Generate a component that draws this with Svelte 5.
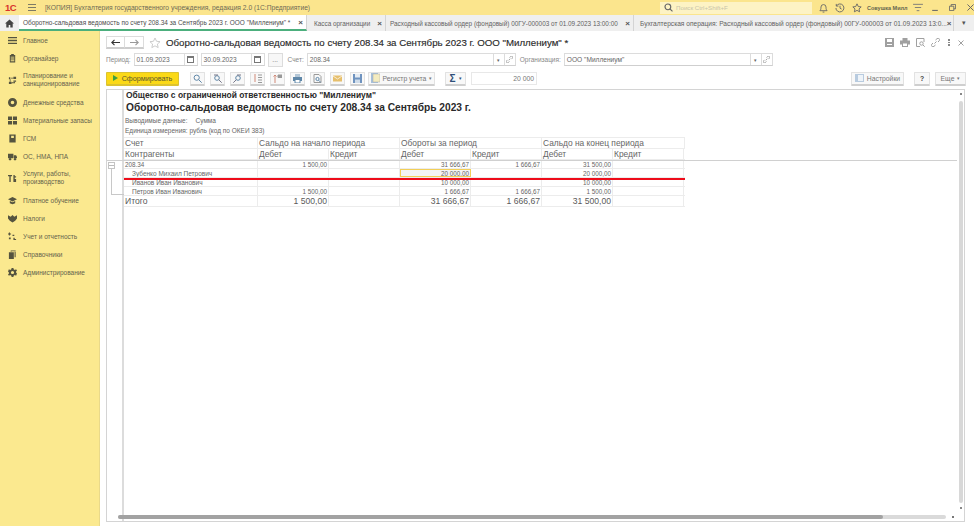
<script>
  const menu = [
    { name: 'Главное', icon: 'lines' },
    { name: 'Органайзер', icon: 'note' },
    { name: 'Планирование и санкционирование', icon: 'plan', tall: true },
    { name: 'Денежные средства', icon: 'coin' },
    { name: 'Материальные запасы', icon: 'grid' },
    { name: 'ГСМ', icon: 'fuel' },
    { name: 'ОС, НМА, НПА', icon: 'truck' },
    { name: 'Услуги, работы, производство', icon: 'tools', tall: true },
    { name: 'Платное обучение', icon: 'cap' },
    { name: 'Налоги', icon: 'eagle' },
    { name: 'Учет и отчетность', icon: 'calc' },
    { name: 'Справочники', icon: 'books' },
    { name: 'Администрирование', icon: 'gear' }
  ];

  const tabs = [
    { text: 'Касса организации', w: 79, fs: 6.4 },
    { text: 'Расходный кассовый ордер (фондовый) 00ГУ-000003 от 01.09.2023 13:00:00', w: 248, fs: 6.4 },
    { text: 'Бухгалтерская операция: Расходный кассовый ордер (фондовый) 00ГУ-000003 от 01.09.2023 13:0...', w: 320, fs: 6.6 }
  ];

  const rows = [
    { cls: 'small', name: '208.34', v: ['1 500,00', '', '31 666,67', '1 666,67', '31 500,00', ''] },
    { cls: 'small sub', name: 'Зубенко Михаил Петрович', v: ['', '', '20 000,00', '', '20 000,00', ''], active: true },
    { cls: 'small sub', name: 'Иванов Иван Иванович', v: ['', '', '10 000,00', '', '10 000,00', ''] },
    { cls: 'small sub', name: 'Петров Иван Иванович', v: ['1 500,00', '', '1 666,67', '1 666,67', '1 500,00', ''] },
    { cls: 'total', name: 'Итого', v: ['1 500,00', '', '31 666,67', '1 666,67', '31 500,00', ''] }
  ];

  const tools = ['find', 'findnext', 'findprev', 'sort', 'top', 'print', 'preview', 'mail', 'save'];
</script>

<div class="top">
  <span class="logo">1С</span>
  <span class="burger"><i></i><i></i><i></i></span>
  <span class="app-title">[КОПИЯ] Бухгалтерия государственного учреждения, редакция 2.0 (1С:Предприятие)</span>
  <div class="search">
    <svg width="9" height="9" viewBox="0 0 10 10" fill="none" stroke="#666" stroke-width="1.3"><circle cx="4.3" cy="4.3" r="3.2"/><path d="M6.6 6.600 9.400 9.400"/></svg>
    <span>Поиск Ctrl+Shift+F</span>
  </div>
  <div class="top-icons">
    <svg width="9" height="10" viewBox="0 0 10 11" fill="none" stroke="#666"><path d="M1 8.500c1-1 1.200-2 1.200-4a2.800 2.800 0 0 1 5.600 0c0 2 .2 3 1.200 4zM4 10h2"/></svg>
    <svg class="hist" width="10" height="10" viewBox="0 0 11 11" fill="none" stroke="#666"><path d="M1.600 3.200A4.400 4.400 0 1 1 1 5.500M1.400 1v2.400h2.400M5.500 3v2.700l1.800 1"/></svg>
    <svg class="hist" width="10" height="10" viewBox="0 0 11 11" fill="none" stroke="#666"><path d="m5.500.9 1.400 3 3.200.4-2.400 2.200.7 3.200-2.900-1.600-2.900 1.600.7-3.200L.9 4.300l3.200-.4z"/></svg>
    <span class="user">Совушка Милл</span>
    <svg class="filt" width="10" height="9" viewBox="0 0 11 10" fill="none" stroke="#777"><path d="M0 1.500h11M2 5h7M4 8.500h3"/></svg>
    <svg class="min" width="6" height="8" viewBox="0 0 7 10" fill="none" stroke="#666" stroke-width="1.300"><path d="M0 8h7"/></svg>
    <svg class="win" width="7" height="7" viewBox="0 0 8 8" fill="none" stroke="#666"><path d="M.5 2.500h5v5h-5zM2.500 2.500v-2h5v5h-2"/></svg>
    <svg class="win" width="7" height="7" viewBox="0 0 8 8" fill="none" stroke="#666" stroke-width="1.100"><path d="m.5.5 7 7M7.500.5l-7 7"/></svg>
  </div>
</div>

<div class="tabs">
  <div class="home">
    <svg width="9" height="9" viewBox="0 0 9 9" fill="#444"><path d="M4.500.5 9 4.600H7.700V8.600H5.300V6H3.700V8.600H1.300V4.600H0z"/></svg>
  </div>
  <div class="tab active">
    <span>Оборотно-сальдовая ведомость по счету 208.34 за Сентябрь 2023 г. ООО "Миллениум" *</span>
    <b>×</b>
  </div>
  {#each tabs as tab}
    <div class="tab" style="width: {tab.w}px; font-size: {tab.fs}px">
      <span>{tab.text}</span>
      <b>×</b>
    </div>
  {/each}
  <div class="tab-more">▾</div>
</div>

<div class="page">
  <aside>
    {#each menu as item}
      <div class="item" class:tall={item.tall}>
        <svg width="9" height="9" viewBox="0 0 10 10" fill="#55543f">
          {#if item.icon === 'lines'}
            <path d="M0 1h10v1.400H0zM0 4.300h10v1.400H0zM0 7.600h10V9H0z"/>
          {:else if item.icon === 'note'}
            <path d="M2 1h6v8.500H2zM3 3v1h4V3zm0 2v1h4V5zm0 2v1h4V7z" fill-rule="evenodd"/><path d="M3.500 0h3v1.500h-3z"/>
          {:else if item.icon === 'plan'}
            <path d="M1 1.500h1.500v2H1zM1 6.500h3V9H1zM6 .8h3v2.500H6zM6 5h3v1.500H6z"/><path d="M2 3.500h.8v3H2zM3 2h3v.8H3zM4 7h3v-.5h.8V8H4z"/>
          {:else if item.icon === 'coin'}
            <path d="M5 0a5 5 0 1 0 0 10A5 5 0 0 0 5 0zm0 3a2 2 0 1 1 0 4 2 2 0 0 1 0-4z" fill-rule="evenodd"/>
          {:else if item.icon === 'grid'}
            <path d="M0 .5h4.500v4H0zM5.500.5H10v4H5.500zM0 5.500h4.500v4H0zM5.500 5.500H10v4H5.500z"/>
          {:else if item.icon === 'fuel'}
            <path d="M1.500.5h7v9h-7zM3.500 2v2.500h3V2z" fill-rule="evenodd"/>
          {:else if item.icon === 'truck'}
            <path d="M0 2h6v5H0zM6.500 3.500H9l1 2V7H6.500z"/><circle cx="2.300" cy="8" r="1.300"/><circle cx="7.800" cy="8" r="1.300"/>
          {:else if item.icon === 'tools'}
            <path d="M0 1h4.500v1.400H3V9H1.500V2.400H0zM6 1h1.500v1.600H9V4H7.500v1.500H9V9H6z"/>
          {:else if item.icon === 'cap'}
            <path d="M5 1l5 2.500L5 6 0 3.500z"/><path d="M2 5.500 5 7l3-1.500V8L5 9.300 2 8z"/>
          {:else if item.icon === 'eagle'}
            <path d="M0 1.500 3 3l2-2 2 2 3-1.500V5L8 7.500l-3 2-3-2L0 5z"/>
          {:else if item.icon === 'calc'}
            <path d="M1 .5h1.200v1.200h1.200v1.100H2.200V4H1V2.800H0V1.700h1zM5 3h2v1.500H5zM1 6h2v2H1zM6 6.500h1.500v1.200H9V9H6z"/>
          {:else if item.icon === 'books'}
            <path d="M1 2.500h5.500V10H1zM3 .5h5.500v.8H3.800v.6h4.700V8H7.300V2H3z"/>
          {:else}
            <path d="M4 0h2l.3 1.500 1.300.6L9 1.300l1 1.700-1.100 1 .1 1 1 1L9 8.700l-1.400-.8-1.300.6L6 10H4l-.3-1.500-1.300-.6L1 8.700 0 7l1.100-1-.1-1-1-1L1 1.300l1.400.8 1.300-.6zM5 3.200a1.800 1.800 0 1 0 0 3.600 1.800 1.800 0 0 0 0-3.600z" fill-rule="evenodd"/>
          {/if}
        </svg>
        <span>{item.name}</span>
      </div>
    {/each}
  </aside>

  <main>
    <div class="title-row">
      <div class="nav-btns">
        <button><svg width="9" height="7" viewBox="0 0 9 7" fill="none" stroke="#333" stroke-width="1.100"><path d="M9 3.500H1M3.500.8.800 3.500l2.700 2.700"/></svg></button>
        <button><svg width="9" height="7" viewBox="0 0 9 7" fill="none" stroke="#999" stroke-width="1.100"><path d="M0 3.500h8M5.500.8l2.700 2.700-2.700 2.700"/></svg></button>
      </div>
      <svg class="star" width="12" height="12" viewBox="0 0 11 11" fill="none" stroke="#c4c4c4" stroke-width=".8"><path d="m5.500.9 1.400 3 3.200.4-2.400 2.200.7 3.200-2.900-1.600-2.900 1.600.7-3.200L.9 4.300l3.200-.4z"/></svg>
      <h1>Оборотно-сальдовая ведомость по счету 208.34 за Сентябрь 2023 г. ООО "Миллениум" *</h1>
      <div class="win-icons">
        <svg width="9" height="9" viewBox="0 0 9 9" fill="#a0a0a0"><path d="M0 0h9v9H0zM2 1v3h5V1zM2 6v1h5V6z" fill-rule="evenodd"/></svg>
        <svg width="10" height="9" viewBox="0 0 10 9" fill="#a0a0a0"><path d="M2.500 0h5v2.500H10v4H8V9H2V6.500H0v-4h2.500zM3 5.500V8h4V5.500z" fill-rule="evenodd"/></svg>
        <svg width="9" height="9" viewBox="0 0 9 9" fill="none" stroke="#a0a0a0"><path d="M8 4V.5H.5v8H4"/><circle cx="5.500" cy="5.500" r="1.700"/><path d="m7 7 1.700 1.700"/></svg>
        <svg width="9" height="9" viewBox="0 0 9 9" fill="none" stroke="#a0a0a0"><path d="M3.500 5.500l2-2M4.500 2 6 .7a1.500 1.500 0 0 1 2.200 2.100L7 4M4.500 7 3 8.300A1.500 1.500 0 0 1 .8 6.200L2 5"/></svg>
        <span class="dots"><i></i><i></i><i></i></span>
        <svg width="6" height="6" viewBox="0 0 6 6" stroke="#a0a0a0"><path d="m.5.5 5 5M5.500.5l-5 5"/></svg>
      </div>
    </div>

    <div class="filters">
      <label for="d1">Период:</label>
      <div class="field w64"><span id="d1">01.09.2023</span><em class="cal"></em></div>
      <div class="field w64 ml3"><span>30.09.2023</span><em class="cal"></em></div>
      <button class="dots-btn">...</button>
      <label for="acc" class="ml5">Счет:</label>
      <div class="field w209"><span id="acc">208.34</span><em>▾</em><em><svg width="7" height="7" viewBox="0 0 9 9" fill="none" stroke="#888"><path d="M3.500 5.500l2-2M4.500 2 6 .7a1.500 1.500 0 0 1 2.200 2.100L7 4M4.500 7 3 8.300A1.500 1.500 0 0 1 .8 6.200L2 5"/></svg></em></div>
      <label for="org" class="ml4">Организация:</label>
      <div class="field w209"><span id="org">ООО "Миллениум"</span><em>▾</em><em><svg width="7" height="7" viewBox="0 0 9 9" fill="none" stroke="#888"><path d="M3.500 5.500l2-2M4.500 2 6 .7a1.500 1.500 0 0 1 2.200 2.100L7 4M4.500 7 3 8.300A1.500 1.500 0 0 1 .8 6.200L2 5"/></svg></em></div>
    </div>

    <div class="toolbar">
      <button class="primary"><span class="play"></span>Сформировать</button>
      <div class="tools">
        {#each tools as t}
          <button class="tool">
            <svg width="9" height="9" viewBox="0 0 9 9" fill="none" stroke="#5f87a8">
              {#if t === 'find'}
                <circle cx="3.700" cy="3.700" r="2.600"/><path d="m5.700 5.700 3 3"/>
              {:else if t === 'findnext'}
                <circle cx="4" cy="4" r="2.300"/><path d="m5.700 5.700 3 3M1 1h4" stroke="#778"/>
              {:else if t === 'findprev'}
                <circle cx="5" cy="4" r="2.300"/><path d="M3.300 5.700l-3 3M8 1H4" stroke="#778"/>
              {:else if t === 'sort'}
                <path d="M2 0v8" stroke="#d08a78"/><path d="M5 1h4M5 3.500h4M5 6h4M5 8.500h4" stroke="#999"/>
              {:else if t === 'top'}
                <path d="M2 9V1M.5 2.500 2 1l1.500 1.500" stroke="#d08a78"/><path d="M5 1h4v2.500H5z" fill="#999" stroke="#999"/>
              {:else if t === 'print'}
                <path d="M2 0h5v3H2z" fill="#b3c6d6" stroke="none"/><path d="M0 3h9v4H0z" fill="#5f87a8" stroke="none"/><path d="M2 5.500h5V9H2z" fill="#fff"/>
              {:else if t === 'preview'}
                <path d="M1 .5h5l2 2v6H1z" stroke="#999"/><circle cx="4.500" cy="5" r="1.600"/><path d="m5.700 6.300 2 2"/>
              {:else if t === 'mail'}
                <path d="M0 1.500h9v6H0z" fill="#e6bf6c" stroke="none"/><path d="m0 2 4.500 3L9 2" stroke="#fff" stroke-width=".7"/>
              {:else}
                <path d="M0 0h9v9H0z" fill="#6f93bf" stroke="none"/><path d="M2 0h5v3.500H2z" fill="#e4ebf3" stroke="none"/><path d="M2 5.500h5V9H2z" fill="#cfdcea" stroke="none"/>
              {/if}
            </svg>
          </button>
        {/each}
      </div>
      <button class="register">
        <svg width="9" height="10" viewBox="0 0 9 10"><path d="M0 0h7v10H0z" fill="#a6c0da"/><path d="M2 1h7v8H2z" fill="#f4ecc0" stroke="#aaa" stroke-width=".5"/></svg>
        Регистр учета <small>▾</small>
      </button>
      <button class="sum"><b>Σ</b><small>▾</small></button>
      <div class="sum-value">20 000</div>
      <div class="tool-right">
        <button class="settings">
          <svg width="9" height="8" viewBox="0 0 9 8"><path d="M0 0h9v8H0z" fill="#b8cbdf"/><path d="M3 1h5v6H3z" fill="#eef3f8"/></svg>
          Настройки
        </button>
        <button class="help">?</button>
        <button class="more">Еще <small>▾</small></button>
      </div>
    </div>

    <section class="report">
      <div class="gutter"></div>
      <div class="sheet">
        <div class="org">Общество с ограниченной ответственностью "Миллениум"</div>
        <div class="report-title">Оборотно-сальдовая ведомость по счету 208.34 за Сентябрь 2023 г.</div>
        <div class="meta first"><span>Выводимые данные:</span><span>Сумма</span></div>
        <div class="meta">Единица измерения: рубль (код по ОКЕИ 383)</div>

        <div class="table">
          <div class="row head">
            <div class="c name">Счет</div>
            <div class="c span">Сальдо на начало периода</div>
            <div class="c span">Обороты за период</div>
            <div class="c span">Сальдо на конец периода</div>
          </div>
          <div class="row head second">
            <div class="c name">Контрагенты</div>
            {#each ['Дебет', 'Кредит', 'Дебет', 'Кредит', 'Дебет', 'Кредит'] as h}
              <div class="c num-w">{h}</div>
            {/each}
          </div>
          {#each rows as r}
            <div class="row {r.cls}">
              <div class="c name">{r.name}</div>
              {#each r.v as val, i}
                <div class="c num-w right" class:sel={r.active && i === 2}>{val}</div>
              {/each}
            </div>
          {/each}
        </div>
      </div>

      <span class="split"></span>
      <span class="rule"></span>
      <span class="tree-box"></span>
      <span class="tree-v"></span>
      <span class="tree-h"></span>
      <span class="vscroll"></span>
      <span class="varrow up"></span>
      <span class="varrow down"></span>
      <span class="hscroll"><i></i></span>
      <span class="harrow"></span>
    </section>
  </main>
</div>

<style>
  :global(body) {
    margin: 0;
    background: #fff;
    font-family: "Liberation Sans", Arial, sans-serif;
    color: #4a4a4a;
    overflow: hidden;
  }
  button {
    font-family: inherit;
    padding: 0;
    margin: 0;
  }

  .top {
    height: 15px;
    background: #fbe58d;
    display: flex;
    align-items: center;
  }
  .logo {
    width: 24px;
    padding-left: 5px;
    box-sizing: border-box;
    color: #d8342c;
    font-weight: bold;
    font-size: 9.5px;
    letter-spacing: -0.5px;
  }
  .burger {
    display: flex;
    flex-direction: column;
    gap: 2px;
    width: 8px;
    margin-left: 4px;
  }
  .burger i {
    height: 1px;
    background: #7d7a65;
  }
  .app-title {
    margin-left: 9px;
    font-size: 6.7px;
    color: #6e6a55;
    white-space: nowrap;
    width: 615px;
  }
  .search {
    width: 152px;
    height: 12px;
    background: #fdf3c4;
    display: flex;
    align-items: center;
    gap: 3px;
    padding-left: 4px;
    box-sizing: border-box;
    font-size: 6.2px;
    color: #c9c4aa;
  }
  .top-icons {
    display: flex;
    align-items: center;
    margin-left: 7px;
  }
  .hist { margin-left: 7px; }
  .user {
    font-size: 5.5px;
    font-weight: bold;
    color: #66654f;
    margin-left: 5px;
    white-space: nowrap;
  }
  .filt { margin-left: 5px; }
  .min { margin-left: 9px; }
  .win { margin-left: 11px; }
  .ml3 { margin-left: 3px; }
  .ml4 { margin-left: 4px; }
  .ml5 { margin-left: 5px; }

  .tabs {
    height: 16px;
    background: #efefef;
    display: flex;
  }
  .home {
    width: 19px;
    display: flex;
    align-items: center;
    justify-content: center;
  }
  .tab {
    box-sizing: border-box;
    display: flex;
    align-items: center;
    justify-content: space-between;
    padding: 0 3px 0 5px;
    font-size: 6.45px;
    color: #5f5f5f;
    white-space: nowrap;
    overflow: hidden;
    border-right: 1px solid #d4d4d4;
  }
  .tab:nth-child(3) { padding-left: 7px; }
  .tab:nth-child(4) { padding-left: 4px; }
  .tab:nth-child(5) { padding-left: 6px; }
  .tab b {
    font-size: 8px;
    color: #555;
    font-weight: bold;
  }
  .tab.active {
    width: 288px;
    background: #fff;
    border-bottom: 2px solid #4caf7d;
    color: #4c4c4c;
    padding-left: 4px;
  }
  .tab-more {
    width: 20px;
    text-align: center;
    font-size: 7px;
    line-height: 15px;
    color: #555;
  }

  .page {
    display: flex;
    height: 495px;
  }
  aside {
    width: 100px;
    background: #fbe98f;
    flex: none;
    font-size: 6.5px;
    color: #65634d;
    border-right: 1px solid #e9d98a;
    box-sizing: border-box;
  }
  .item {
    height: 18px;
    display: flex;
    align-items: center;
    padding-left: 8px;
    gap: 6px;
  }
  .item svg { flex: none; }
  .item.tall {
    height: 26px;
    line-height: 8.5px;
  }
  .item span { width: 74px; }

  main {
    flex: 1;
    min-width: 0;
    padding: 0 8px 0 6px;
  }
  .title-row {
    height: 21px;
    display: flex;
    align-items: center;
    padding-top: 2px;
    box-sizing: border-box;
  }
  .nav-btns {
    display: flex;
  }
  .nav-btns button {
    width: 19px;
    height: 13px;
    background: #fff;
    border: 1px solid #dcdcdc;
    border-bottom: 2px solid #cdcdcd;
    display: flex;
    align-items: center;
    justify-content: center;
  }
  .nav-btns button + button { border-left: 0; }
  .star { margin-left: 5px; }
  h1 {
    margin: 0 0 0 5px;
    font-size: 9.7px;
    font-weight: normal;
    color: #2a2a2a;
    white-space: nowrap;
    -webkit-text-stroke: 0.15px #2a2a2a;
  }
  .win-icons {
    margin-left: auto;
    display: flex;
    align-items: center;
    gap: 6px;
    padding-right: 2px;
  }
  .dots {
    display: flex;
    flex-direction: column;
    gap: 1px;
    width: 6px;
    align-items: center;
  }
  .dots i {
    width: 1.5px;
    height: 1.5px;
    background: #888;
  }

  .filters {
    height: 15px;
    display: flex;
    align-items: center;
    font-size: 6.5px;
    color: #888;
  }
  label {
    margin-right: 3px;
    white-space: nowrap;
  }
  .field {
    height: 13px;
    box-sizing: border-box;
    background: #fff;
    border: 1px solid #dcdcdc;
    border-bottom-color: #cfcfcf;
    display: flex;
    align-items: center;
    color: #666;
    font-size: 6.6px;
  }
  .field span {
    flex: 1;
    padding-left: 2px;
    white-space: nowrap;
  }
  .field em {
    font-style: normal;
    width: 10px;
    height: 100%;
    border-left: 1px solid #dcdcdc;
    display: flex;
    align-items: center;
    justify-content: center;
    font-size: 5px;
  }
  .field em.cal {
    width: 12px;
  }
  .field em.cal::before {
    content: '';
    width: 5px;
    height: 4px;
    border: 1px solid #777;
    border-top-width: 2px;
  }
  .w64 { width: 64px; }
  .w209 { width: 209px; }
  .dots-btn {
    width: 15px;
    height: 14px;
    margin-left: 3px;
    background: #f7f7f7;
    border: 1px solid #dcdcdc;
    color: #777;
    font-size: 7px;
  }

  .toolbar {
    height: 15px;
    margin-top: 4px;
    display: flex;
    align-items: center;
    font-size: 6.8px;
    color: #777;
  }
  .toolbar button {
    height: 14px;
    background: #f8f8f8;
    border: 1px solid #e2e2e2;
    border-bottom: 2px solid #cfcfcf;
    box-sizing: border-box;
    color: #777;
    font-size: 6.8px;
    display: flex;
    align-items: center;
    justify-content: center;
    gap: 3px;
    border-radius: 1px;
  }
  .toolbar button.primary {
    width: 73px;
    background: #fbd917;
    border-color: #dcc330;
    color: #5a5830;
    font-size: 7.2px;
    gap: 4px;
  }
  .play {
    width: 0;
    height: 0;
    border-left: 5px solid #3d9f3f;
    border-top: 3px solid transparent;
    border-bottom: 3px solid transparent;
  }
  .tools {
    display: flex;
    gap: 5px;
    margin-left: 11px;
  }
  .toolbar .tool { width: 15px; }
  .toolbar .register {
    width: 67px;
    margin-left: 3px;
  }
  .toolbar .sum {
    width: 21px;
    margin-left: 10px;
    color: #2e4f78;
  }
  .sum b { font-size: 10px; }
  small { font-size: 5px; }
  .sum-value {
    width: 66px;
    height: 13px;
    margin-left: 5px;
    border: 1px solid #e8e8e8;
    box-sizing: border-box;
    text-align: right;
    padding-right: 2px;
    line-height: 11px;
    color: #777;
  }
  .tool-right {
    margin-left: auto;
    display: flex;
    gap: 10px;
  }
  .toolbar .settings { width: 53px; }
  .toolbar .help {
    width: 16px;
    margin-right: -5px;
    font-weight: bold;
    color: #444;
  }
  .toolbar .more { width: 31px; }

  .report {
    position: relative;
    margin-top: 3px;
    margin-right: 1px;
    height: 433px;
    box-sizing: border-box;
    border: 1px solid #d4d4d4;
    display: flex;
  }
  .gutter {
    width: 15px;
    flex: none;
    border-right: 2px solid #dcdcdc;
  }
  .sheet {
    flex: 1;
    min-width: 0;
  }
  .org {
    font-size: 8.45px;
    font-weight: bold;
    color: #2a2a2a;
    height: 10px;
    line-height: 10px;
    padding-left: 2px;
    white-space: nowrap;
  }
  .report-title {
    font-size: 10.2px;
    font-weight: bold;
    color: #2a2a2a;
    height: 14px;
    line-height: 16px;
    padding-left: 2px;
    white-space: nowrap;
  }
  .meta {
    font-size: 6.5px;
    color: #666;
    height: 9px;
    line-height: 9px;
    padding-left: 1px;
    white-space: nowrap;
  }
  .meta.first {
    margin-top: 2px;
    margin-bottom: 1px;
    display: flex;
    gap: 8px;
  }
  .table {
    margin-top: 2px;
    width: 561px;
  }
  .row {
    display: flex;
    border-bottom: 1px solid #ececec;
    box-sizing: border-box;
  }
  .head {
    height: 12px;
    font-size: 8.4px;
    color: #666;
    border-top: 1px solid #ececec;
  }
  .head.second {
    border-top: 0;
    height: 11px;
  }
  .c {
    box-sizing: border-box;
    border-right: 1px solid #ececec;
    padding: 0 1px;
    white-space: nowrap;
    overflow: hidden;
    line-height: 10px;
  }
  .c.name { width: 134px; }
  .c.span { width: 142px; }
  .c.span:last-child { width: 143px; }
  .c.num-w { width: 71px; }
  .c.right { text-align: right; }
  .small {
    height: 9px;
    font-size: 6.3px;
    color: #666;
  }
  .small .c { line-height: 9.5px; }
  .small.sub .c.name { padding-left: 8px; font-size: 6.5px; }
  .total {
    height: 11px;
    font-size: 8.6px;
    color: #5a5a5a;
  }
  .total .c { line-height: 10px; }
  .c.sel {
    background: #f4f4f4;
    outline: 1px solid #f2cf58;
    outline-offset: -1px;
  }

  .split {
    position: absolute;
    left: 0;
    right: 7px;
    top: 70px;
    height: 1px;
    background: #d0d0d0;
  }
  .rule {
    position: absolute;
    left: 17px;
    top: 88px;
    width: 561px;
    height: 2px;
    background: #ee0c1a;
  }
  .tree-box {
    position: absolute;
    left: 1px;
    top: 72px;
    width: 5px;
    height: 5px;
    border: 1px solid #c4c4c4;
    background: linear-gradient(#bbb, #bbb) center / 5px 1px no-repeat;
  }
  .tree-v {
    position: absolute;
    left: 4px;
    top: 79px;
    width: 1px;
    height: 25px;
    background: #c8c8c8;
  }
  .tree-h {
    position: absolute;
    left: 4px;
    top: 104px;
    width: 13px;
    height: 1px;
    background: #c8c8c8;
  }
  .vscroll {
    position: absolute;
    right: 1px;
    top: 11px;
    width: 4px;
    height: 402px;
    border-radius: 2px;
    background: #d8d8d8;
  }
  .varrow {
    position: absolute;
    right: 2px;
    width: 2px;
    height: 2px;
    background: #888;
  }
  .varrow.up { top: 3px; }
  .varrow.down { top: 417px; }
  .hscroll {
    position: absolute;
    left: 11px;
    top: 425px;
    width: 828px;
    height: 4px;
    border-radius: 2px;
    background: #dadada;
  }
  .hscroll i {
    display: block;
    width: 765px;
    height: 100%;
    border-radius: 2px;
    background: #a2a2a2;
  }
  .harrow {
    position: absolute;
    right: 10px;
    top: 426px;
    width: 2px;
    height: 2px;
    background: #777;
  }
</style>
